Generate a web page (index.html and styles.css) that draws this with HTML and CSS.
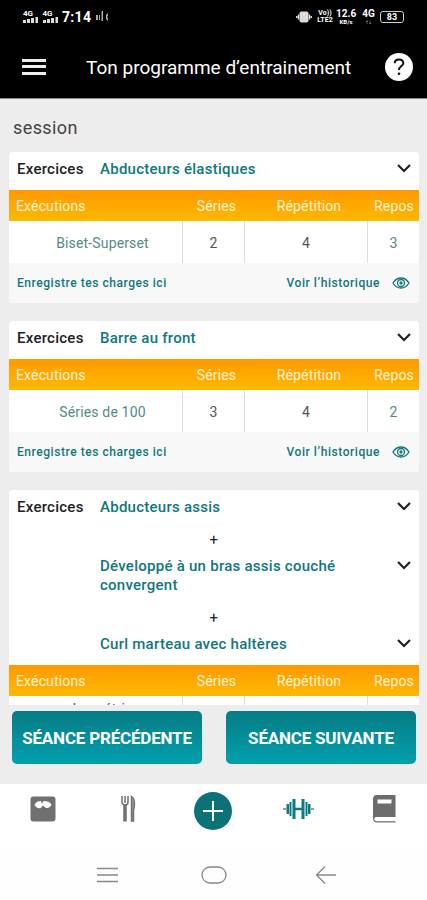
FILE: index.html
```html
<!DOCTYPE html>
<html lang="fr">

<head>
    <meta charset="UTF-8">
    <meta name="viewport" content="width=device-width, initial-scale=1.0">
    <title>Ton programme d’entrainement</title>
    <link rel="stylesheet" href="styles.css">
</head>

<body>
    <header class="top">
        <div class="status-bar">
            <div class="status-left">
                <span class="signal"><small>4G</small><svg width="15" height="6" viewBox="0 0 15 6"><path d="M0 3h3v3H0zM4 2h3v4H4zM8 1h3v5H8zM12.500 0H15v6h-2.500z"/></svg></span>
                <span class="signal"><small>4G</small><svg width="15" height="6" viewBox="0 0 15 6"><path d="M0 3h3v3H0zM4 2h3v4H4zM8 1h3v5H8zM12.500 0H15v6h-2.500z"/></svg></span>
                <span class="clock">7:14</span>
                <svg class="dim" width="13" height="12" viewBox="0 0 13 12"><path d="M0 4h2v5H0zM3 4h1v5H3zM5.500 0h1.500v10H5.500zM10 4l2-2v3l-1 1 1 1v3l-2-2z"/></svg>
            </div>
            <div class="status-right">
                <svg class="vibrate" width="16" height="12" viewBox="0 0 16 12"><rect x="3.500" y=".5" width="9" height="11" rx="2"/><path d="M0 5h1.500v2H0zM1.800 3.500h1.500v5H1.800zM12.700 3.500h1.500v5h-1.500zM14.500 5H16v2h-1.500z"/></svg>
                <span class="stack volte"><b>Vo))</b><b>LTE2</b></span>
                <span class="stack speed"><b class="big">12.6</b><b>KB/s</b></span>
                <span class="stack net"><b class="big">4G</b><b>↑↓</b></span>
                <span class="battery">83</span>
            </div>
        </div>
        <div class="app-bar">
            <span class="menu"><i></i><i></i><i></i></span>
            <h1>Ton programme d’entrainement</h1>
            <span class="help"><svg width="12" height="18" viewBox="0 0 12 18"><path d="M1.700 5.300C1.700 2.900 3.600 1.500 6 1.500s4.300 1.400 4.300 3.700C10.300 8.100 6 8.200 6 12" fill="none" stroke="#111" stroke-width="2"/><circle cx="6" cy="15.700" r="1.300" fill="#111"/></svg></span>
        </div>
    </header>

    <main class="content">
        <h2>session</h2>

        <section class="card">
            <div class="exercises">
                <span class="label">Exercices</span>
                <div class="names">
                    <div class="name"><span>Abducteurs élastiques</span><svg class="chevron" viewBox="0 0 14 9"><path d="M1 1l6 6 6-6"/></svg></div>
                </div>
            </div>
            <div class="row head"><span>Exécutions</span><span>Séries</span><span>Répétition</span><span>Repos</span></div>
            <div class="row"><span>Biset-Superset</span><span>2</span><span>4</span><span>3</span></div>
            <div class="card-footer">
                <span>Enregistre tes charges ici</span>
                <span class="history">Voir l’historique<svg class="eye" viewBox="0 0 18 12"><path d="M1 6c2-3.300 4.700-5 8-5s6 1.700 8 5c-2 3.300-4.700 5-8 5S3 9.300 1 6z"/><circle cx="9" cy="6" r="3.500"/><circle cx="9" cy="6" r="1"/></svg></span>
            </div>
        </section>

        <section class="card">
            <div class="exercises">
                <span class="label">Exercices</span>
                <div class="names">
                    <div class="name"><span>Barre au front</span><svg class="chevron" viewBox="0 0 14 9"><path d="M1 1l6 6 6-6"/></svg></div>
                </div>
            </div>
            <div class="row head"><span>Exécutions</span><span>Séries</span><span>Répétition</span><span>Repos</span></div>
            <div class="row"><span>Séries de 100</span><span>3</span><span>4</span><span>2</span></div>
            <div class="card-footer">
                <span>Enregistre tes charges ici</span>
                <span class="history">Voir l’historique<svg class="eye" viewBox="0 0 18 12"><path d="M1 6c2-3.300 4.700-5 8-5s6 1.700 8 5c-2 3.300-4.700 5-8 5S3 9.300 1 6z"/><circle cx="9" cy="6" r="3.500"/><circle cx="9" cy="6" r="1"/></svg></span>
            </div>
        </section>

        <section class="card">
            <div class="exercises">
                <span class="label">Exercices</span>
                <div class="names">
                    <div class="name"><span>Abducteurs assis</span><svg class="chevron" viewBox="0 0 14 9"><path d="M1 1l6 6 6-6"/></svg></div>
                    <div class="plus">+</div>
                    <div class="name"><span>Développé à un bras assis couché convergent</span><svg class="chevron" viewBox="0 0 14 9"><path d="M1 1l6 6 6-6"/></svg></div>
                    <div class="plus">+</div>
                    <div class="name"><span>Curl marteau avec haltères</span><svg class="chevron" viewBox="0 0 14 9"><path d="M1 1l6 6 6-6"/></svg></div>
                </div>
            </div>
            <div class="row head"><span>Exécutions</span><span>Séries</span><span>Répétition</span><span>Repos</span></div>
            <div class="row tall"><span>Isométrie</span><span></span><span></span><span></span></div>
        </section>
    </main>

    <div class="actions">
        <button type="button">SÉANCE PRÉCÉDENTE</button>
        <button type="button">SÉANCE SUIVANTE</button>
    </div>

    <nav class="tabs">
        <span><svg width="26" height="26" viewBox="0 0 26 26"><rect x=".5" y=".5" width="25" height="25" rx="3" fill="#707070"/><path d="M4.500 8.500C6 6 8 5 11 5l1 3 1.500-3c4 0 6.500 1 8 3.500-1 3-3.500 4-6 3.200L13 9.500l-2.500 2.700c-2.500.6-5-.7-6-3.700z" fill="#fff"/></svg></span>
        <span><svg width="16" height="28" viewBox="0 0 16 28" fill="none" stroke="#707070"><path d="M2 1v6c0 4 6 4 6 0V1M5 1v7" stroke-width="1.500"/><path d="M5 10v16.500" stroke-width="3.500"/><path d="M11.500 1.500c3 2 3.500 8 2 14v10.500h-2z" fill="#999" stroke-width="1.500"/></svg></span>
        <span class="add"><svg width="24" height="24" viewBox="0 0 24 24"><path d="M12 2v20M2 12h20" stroke="#fff" stroke-width="2"/></svg></span>
        <span><svg width="31" height="20" viewBox="0 0 31 20" fill="#0c7a80"><path d="M0 9h3v2H0z" fill="#999"/><path d="M3.500 5H6v10H3.500zM6.500 3H8.500v14H6.500zM9.500 0h3v20h-3zM12.500 8.700h6v2.600h-6zM18.500 0h3v20h-3zM22.500 3h2v14h-2zM25 5h2.500v10H25z"/><path d="M28 9h3v2h-3z" fill="#999"/></svg></span>
        <span><svg width="24" height="28" viewBox="0 0 24 28"><path d="M4.500 0H23.500v22H4.500c-1.800 0-2.300 1-2.300 2s1 2.200 2.300 2.200h19v1.300H5c-2.500 0-4-1.500-4-4V4c0-2.500 1.500-4 3.500-4z" fill="#6d6d6d"/><path d="M5.500 4.500h14v4h-14z" fill="#fff"/></svg></span>
    </nav>

    <div class="system-nav">
        <svg width="22" height="16" viewBox="0 0 22 16"><path d="M0 1.500h21M0 8h21M0 14.500h21"/></svg>
        <svg width="26" height="18" viewBox="0 0 26 18"><rect x="1" y="1" width="24" height="16" rx="8"/></svg>
        <svg width="22" height="18" viewBox="0 0 22 18"><path d="M10 .5L1.500 9l8.500 8.500M1.500 9H21"/></svg>
    </div>
</body>

</html>
```
FILE: styles.css
```css
* {
    box-sizing: border-box;
}

body {
    margin: 0;
    width: 427px;
    height: 900px;
    display: flex;
    flex-direction: column;
    overflow: hidden;
    font-family: Roboto, Arial, sans-serif;
    background: #ededed;
    color: #222;
}

.top {
    height: 99px;
    flex: none;
    background: #000;
    color: #fff;
    border-bottom: 1px solid #888;
}

.status-bar {
    height: 34px;
    padding: 0 23px;
    display: flex;
    justify-content: space-between;
    align-items: center;
}

.status-left,
.status-right {
    display: flex;
    align-items: center;
}

.status-left {
    gap: 4.5px;
}

.status-bar svg {
    fill: #ddd;
}

.signal {
    display: flex;
    flex-direction: column;
    width: 15px;
}

.signal small {
    font-size: 8px;
    line-height: 6px;
    font-weight: 700;
}

.clock {
    font-size: 14px;
    font-weight: 700;
    letter-spacing: 0.3px;
}

.status-bar .dim {
    fill: #aaa;
}

.stack {
    display: flex;
    flex-direction: column;
    font-size: 6px;
    line-height: 7px;
    text-align: center;
    white-space: nowrap;
}

.stack .big {
    font-size: 10px;
    line-height: 9px;
}

.volte {
    width: 16px;
    margin-left: 5px;
    font-size: 7px;
}

.speed {
    width: 20px;
    margin-left: 3px;
}

.net {
    width: 15px;
    margin-left: 5px;
}

.battery {
    width: 24px;
    height: 12px;
    margin-left: 4px;
    border: 1.5px solid #ccc;
    border-radius: 3px;
    font-size: 9px;
    line-height: 10px;
    font-weight: 700;
    text-align: center;
}

.app-bar {
    height: 65px;
    display: flex;
    align-items: center;
    padding: 0 14px 0 22px;
}

.menu {
    width: 24px;
    display: flex;
    flex-direction: column;
    gap: 3.5px;
}

.menu i {
    height: 3px;
    background: #eee;
}

h1 {
    margin: 2px 0 0 40px;
    flex: 1;
    font-size: 19px;
    font-weight: 400;
    letter-spacing: 0;
    white-space: nowrap;
}

.help {
    width: 28px;
    height: 28px;
    border-radius: 50%;
    background: #fff;
    display: flex;
    align-items: center;
    justify-content: center;
}

.content {
    height: 606px;
    flex: none;
    overflow: hidden;
    padding: 0 8px 0 9px;
}

h2 {
    height: 53px;
    margin: 0;
    padding: 18px 0 0 4px;
    font-size: 18px;
    line-height: 22px;
    font-weight: 400;
    letter-spacing: 0.4px;
    color: #444;
}

.card {
    margin-bottom: 18px;
    border-radius: 4px;
    background: #fff;
    overflow: hidden;
}

.exercises {
    display: flex;
    padding: 8px 8px 11px;
    font-size: 15px;
    line-height: 19px;
    font-weight: 500;
    letter-spacing: 0.26px;
}

.label {
    width: 83px;
}

.names {
    flex: 1;
}

.name {
    display: flex;
    justify-content: space-between;
    color: #10777c;
}

.name span {
    max-width: 260px;
}

.chevron {
    width: 14px;
    height: 9px;
    margin-top: 4px;
    fill: none;
    stroke: #222;
    stroke-width: 2.2;
}

.plus {
    width: 228px;
    padding: 14px 0 7px;
    line-height: 19px;
    font-weight: 400;
    text-align: center;
}

.row {
    height: 42px;
    display: grid;
    grid-template-columns: 173px 62px 123px 52px;
    text-align: center;
    font-size: 14px;
    letter-spacing: 0.15px;
    color: #555;
}

.row span {
    display: flex;
    align-items: center;
    justify-content: center;
    padding-top: 1px;
}

.row:not(.head) span + span {
    border-left: 1px solid #ddd;
}

.row span:first-child,
.row span:last-child {
    color: #558a84;
}

.row:not(.head) span:first-child {
    padding-left: 14px;
}

.row.head {
    height: 31px;
    background: linear-gradient(#ff9900, #ffb900);
}

.row.head span {
    padding-left: 7px;
    color: #fff3d9;
}

.row.head span:first-child {
    justify-content: flex-start;
}

.row.head span:last-child {
    padding-left: 2px;
}

.row.tall {
    height: 60px;
}

.row.tall span {
    align-items: flex-start;
    padding-top: 4px;
    line-height: 18px;
    color: #555;
}

.card-footer {
    height: 40px;
    padding: 0 9px 0 8px;
    display: flex;
    align-items: center;
    justify-content: space-between;
    background: #f8f8f8;
    font-size: 12px;
    font-weight: 500;
    letter-spacing: 0.55px;
    color: #10777c;
}

.history {
    display: flex;
    align-items: center;
}

.eye {
    width: 18px;
    height: 12px;
    margin-left: 12px;
    fill: none;
    stroke: #10777c;
    stroke-width: 1.3;
}

.actions {
    height: 79px;
    flex: none;
    padding: 6px 11px 0 12px;
    display: flex;
    justify-content: space-between;
}

.actions button {
    width: 190px;
    height: 53px;
    padding: 0;
    border: 0;
    border-radius: 5px;
    background: linear-gradient(#067b84, #02a0ae);
    font-family: inherit;
    font-size: 17px;
    font-weight: 700;
    letter-spacing: -0.2px;
    color: #fff;
}

.tabs {
    height: 66px;
    flex: none;
    padding-bottom: 16px;
    display: grid;
    grid-template-columns: repeat(5, 1fr);
    background: #fff;
}

.tabs span {
    display: flex;
    align-items: center;
    justify-content: center;
}

.tabs .add {
    width: 38px;
    height: 38px;
    margin: 8px auto 0;
    border-radius: 50%;
    background: #0c7278;
}

.system-nav {
    height: 50px;
    flex: none;
    padding: 0 90px 0 97px;
    display: grid;
    grid-template-columns: 104px 1fr 22px;
    align-items: center;
    background: #fefefe;
}

.system-nav svg {
    fill: none;
    stroke: #888;
    stroke-width: 1.3;
}
```
